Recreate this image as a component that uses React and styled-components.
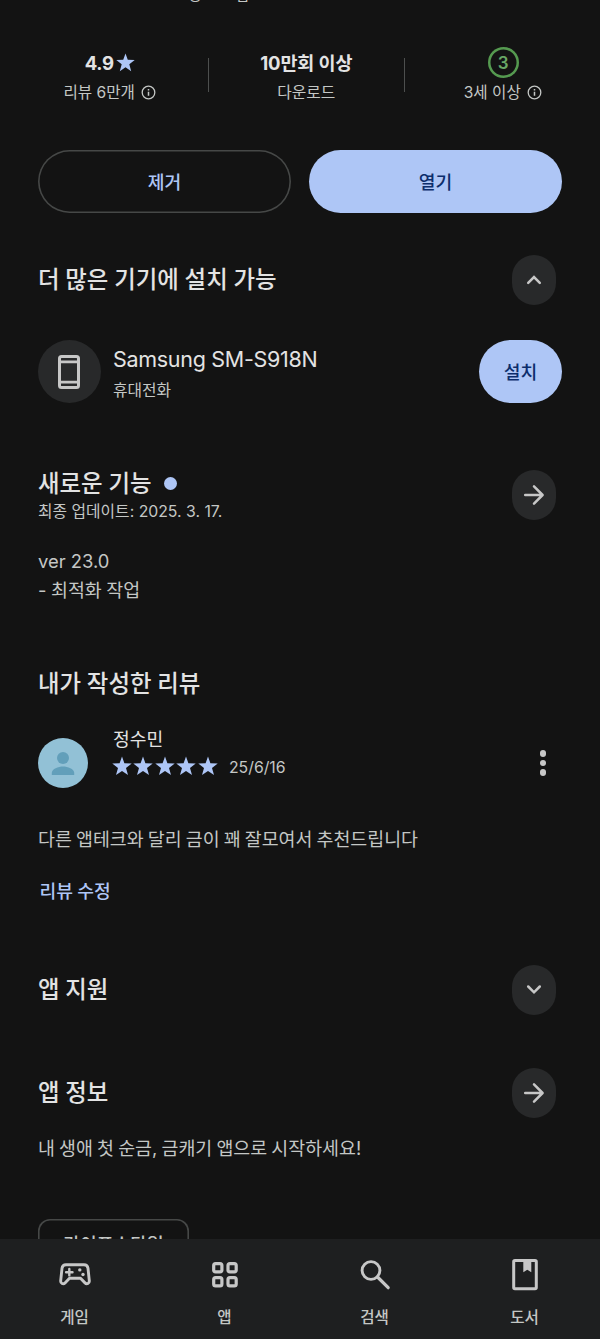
import React from 'react';
import styled, { createGlobalStyle } from 'styled-components';

const Global = createGlobalStyle`
  * { box-sizing: border-box; }
  body { margin: 0; background: #131313; }
  button { font: inherit; padding: 0; border: 0; background: none; color: inherit; }
  h2, p { margin: 0; }
  svg { display: block; flex: none; }
`;

const Screen = styled.div`
  width: 600px;
  height: 1339px;
  display: flex;
  flex-direction: column;
  overflow: hidden;
  background: #131313;
  color: #e3e3e3;
  font-family: Inter, "Noto Sans CJK KR", sans-serif;
`;

const Content = styled.main`
  flex: 1;
  min-height: 0;
  overflow: hidden;
  display: flex;
  flex-direction: column;
`;

const Text = styled.span`
  display: block;
  white-space: nowrap;
  font-size: ${(p) => p.$size}px;
  line-height: ${(p) => p.$line || 24}px;
  font-weight: ${(p) => p.$weight || 400};
  color: ${(p) => p.$color || '#c4c7c5'};
  letter-spacing: ${(p) => p.$track || 0}px;
  word-spacing: ${(p) => p.$word || 0}px;
`;

const AdsNotice = styled.div`
  height: 46px;
  flex: none;
  padding-left: 188px;
  overflow: hidden;
  & > span { margin-top: -17px; }
`;

const Stats = styled.section`
  display: flex;
  align-items: center;
  height: 60px;
  flex: none;
  padding-left: 12px;
  margin-right: -12px;
`;

const Stat = styled.div`
  width: 195.5px;
  display: flex;
  flex-direction: column;
  align-items: center;
`;

const StatTop = styled.div`
  height: 33px;
  display: flex;
  align-items: center;
  gap: 2px;
  padding-top: 1px;
  & > span { margin-top: 1px; }
`;

const StatLabel = styled.div`
  height: 28px;
  display: flex;
  align-items: center;
  gap: 6px;
  & > span { margin-top: 1px; }
`;

const Divider = styled.div`
  width: 1px;
  height: 34px;
  background: #4d4f4e;
  margin-top: -2px;
`;

const AgeBadge = styled.div`
  width: 31px;
  height: 31px;
  margin-left: 1px;
  box-shadow: inset 0 0 0 2.5px #559a50;
  border-radius: 50%;
  display: flex;
  align-items: center;
  justify-content: center;
`;

const Actions = styled.div`
  display: flex;
  justify-content: space-between;
  margin: 44px 38px 0;
  flex: none;
`;

const PillButton = styled.button`
  height: 63px;
  width: ${(p) => p.$width || '253px'};
  flex: none;
  border-radius: 32px;
  display: flex;
  align-items: center;
  justify-content: center;
  background: ${(p) => (p.$filled ? '#aec6f6' : 'transparent')};
  box-shadow: ${(p) => (p.$filled ? 'none' : 'inset 0 0 0 1.6px #464847')};
`;

const SectionHeader = styled.header`
  display: flex;
  justify-content: space-between;
  align-items: center;
  height: 50px;
  flex: none;
  margin: ${(p) => p.$top}px 44px 0 38px;
`;

const RoundButton = styled.button`
  width: 44px;
  height: 50px;
  border-radius: 22px;
  background: #28292a;
  display: flex;
  align-items: center;
  justify-content: center;
`;

const DeviceRow = styled.div`
  display: flex;
  align-items: center;
  margin: 35px 38px 0;
  height: 63px;
  flex: none;
`;

const DeviceIcon = styled.div`
  width: 63px;
  height: 63px;
  border-radius: 50%;
  background: #28292a;
  display: flex;
  align-items: center;
  justify-content: center;
  padding-right: 1px;
`;

const DeviceInfo = styled.div`
  flex: 1;
  margin: 5px 0 0 12px;
  display: flex;
  flex-direction: column;
  gap: 6px;
`;

const TitleWithDot = styled.div`
  display: flex;
  align-items: center;
  gap: 13px;
`;

const UpdateInfo = styled.div`
  display: flex;
  flex-direction: column;
  gap: 1px;
  padding-top: 2px;
`;

const Dot = styled.i`
  width: 13px;
  height: 13px;
  border-radius: 50%;
  background: #aec6f6;
`;

const Block = styled.div`
  margin: ${(p) => p.$top}px 38px 0;
  padding-left: ${(p) => p.$indent || 0}px;
  flex: none;
`;

const Reviewer = styled.div`
  display: flex;
  align-items: center;
  height: 50px;
  flex: none;
  margin: 39px 38px 0;
`;

const ReviewerInfo = styled.div`
  flex: 1;
  margin: -21px 0 0 25px;
`;

const Rating = styled.div`
  display: flex;
  align-items: center;
  gap: 1.4px;
  height: 28px;
  margin-left: -1px;
  & > span { margin: 4px 0 0 10px; }
`;

const MoreButton = styled.button`
  width: 38px;
  height: 50px;
  display: flex;
  flex-direction: column;
  align-items: center;
  justify-content: center;
  gap: 3px;
`;

const MoreDot = styled.i`
  width: 6.5px;
  height: 6.5px;
  border-radius: 50%;
  background: #c7c7c7;
`;

const Chip = styled.div`
  width: 151px;
  height: 50px;
  flex: none;
  margin: 59px 0 0 38px;
  box-shadow: inset 0 0 0 1.6px #464847;
  border-radius: 12px;
  display: flex;
  align-items: center;
  justify-content: center;
`;

const Nav = styled.nav`
  height: 100px;
  flex: none;
  display: grid;
  grid-template-columns: repeat(4, 1fr);
  background: #1e1f20;
`;

const NavItem = styled.div`
  display: flex;
  flex-direction: column;
  align-items: center;
  padding-top: 17px;
  gap: 14px;
  & > span { margin-left: -1px; }
`;

const Star = ({ size }) => (
  <svg width={size} height={size} viewBox="0 0 20 20" fill="#aec6f6">
    <path d="M10 .4l2.400 6.800 7.300.2-5.700 4.500 2 7.200L10 15l-6 4.100 2-7.200L.3 7.400l7.300-.2z" />
  </svg>
);

const Info = () => (
  <svg width="15" height="15" viewBox="0 0 15 15" fill="none" stroke="#c4c7c5" strokeWidth="1.3">
    <circle cx="7.5" cy="7.500" r="6.300" />
    <path d="M7.500 6.800v4M7.500 4v1.500" strokeWidth="1.500" />
  </svg>
);

const Chevron = ({ up }) => (
  <svg width="20" height="20" viewBox="0 0 20 20" fill="none" stroke="#c7c7c7" strokeWidth="2.5" strokeLinecap="round">
    <path d={up ? 'M4.200 12.800L10 7l5.800 5.800' : 'M4.200 6.500L10 12.300l5.800-5.800'} />
  </svg>
);

const Arrow = () => (
  <svg width="24" height="24" viewBox="0 0 24 24" fill="none" stroke="#c7c7c7" strokeWidth="2.5" strokeLinecap="round" strokeLinejoin="round">
    <path d="M3.200 12h17.200M12 3.400l8.600 8.600-8.600 8.600" />
  </svg>
);

const Phone = () => (
  <svg width="22" height="34" viewBox="0 0 22 34" fill="none" stroke="#c7c7c7">
    <rect x="1.500" y="1.500" width="19" height="31" rx="2" strokeWidth="3" />
    <path d="M2 6.900h18M2 27.100h18" strokeWidth="2.600" />
  </svg>
);

const Avatar = () => (
  <svg width="50" height="50" viewBox="0 0 50 50">
    <circle cx="25" cy="25" r="25" fill="#92c1d6" />
    <circle cx="25" cy="20" r="6" fill="#629fba" />
    <path d="M13.800 37v-2.200c0-4 6.600-6.300 11.200-6.300s11.200 2.300 11.200 6.300V37z" fill="#629fba" />
  </svg>
);

const Gamepad = () => (
  <svg width="38" height="38" viewBox="0 0 38 38" fill="none" stroke="#c7c7c7" strokeLinecap="round" strokeLinejoin="round">
    <path d="M10 8.800h18c2.300 0 3.700 1.300 4 3.500l1.300 12.400c.3 2.700-2.500 4-4.300 2.200l-4.500-4.700h-11L9 26.900c-1.800 1.800-4.600.5-4.300-2.200L6 12.300c.3-2.200 1.700-3.500 4-3.500z" strokeWidth="2.900" />
    <path d="M13.300 13v6.400M10.100 16.200h6.400" strokeWidth="2.400" />
    <g fill="#c7c7c7" stroke="none">
      <circle cx="23.800" cy="13.900" r="1.700" />
      <circle cx="27" cy="18.500" r="1.700" />
    </g>
  </svg>
);

const AppsGrid = () => (
  <svg width="38" height="38" viewBox="0 0 38 38" fill="none" stroke="#c7c7c7" strokeWidth="3.200">
    <rect x="7.700" y="7.600" width="8.200" height="8.200" rx="1.900" />
    <rect x="22" y="7.600" width="8.200" height="8.200" rx="1.900" />
    <rect x="7.700" y="21.700" width="8.200" height="8.200" rx="1.900" />
    <rect x="22" y="21.700" width="8.200" height="8.200" rx="1.900" />
  </svg>
);

const Search = () => (
  <svg width="38" height="38" viewBox="0 0 38 38" fill="none" stroke="#c7c7c7" strokeLinecap="round">
    <circle cx="15" cy="14.500" r="8.900" strokeWidth="2.900" />
    <path d="M21.500 21l10.700 10.700" strokeWidth="3.200" />
  </svg>
);

const Book = () => (
  <svg width="38" height="38" viewBox="0 0 38 38" fill="none" stroke="#c7c7c7">
    <rect x="7.700" y="4.500" width="22.600" height="28.300" rx="1.300" strokeWidth="3" />
    <path d="M17.300 5h8v11.200l-4-2.400-4 2.400z" fill="#c7c7c7" stroke="none" />
  </svg>
);

const Title = ({ children }) => (
  <Text as="h2" $size={23.4} $line={30} $weight={500} $color="#e3e3e3" $word={-0.4}>{children}</Text>
);

const tabs = [
  { label: '게임', Icon: Gamepad },
  { label: '앱', Icon: AppsGrid },
  { label: '검색', Icon: Search },
  { label: '도서', Icon: Book },
];

export default function App() {
  return (
    <Screen>
      <Global />
      <Content>
        <AdsNotice><Text $size={15.6}>광고 포함</Text></AdsNotice>
        <Stats>
          <Stat>
            <StatTop><Text $size={18.6} $weight={700} $color="#e3e3e3" $track={-0.3}>4.9</Text><Star size={19} /></StatTop>
            <StatLabel><Text $size={15.6}>리뷰 6만개</Text><Info /></StatLabel>
          </Stat>
          <Divider />
          <Stat>
            <StatTop><Text $size={18.5} $weight={700} $color="#e3e3e3" $track={-0.1}>10만회 이상</Text></StatTop>
            <StatLabel><Text $size={15.8}>다운로드</Text></StatLabel>
          </Stat>
          <Divider />
          <Stat>
            <StatTop><AgeBadge><Text $size={17} $weight={600} $color="#68a765">3</Text></AgeBadge></StatTop>
            <StatLabel><Text $size={15.6}>3세 이상</Text><Info /></StatLabel>
          </Stat>
        </Stats>

        <Actions>
          <PillButton><Text $size={18.2} $weight={500} $color="#aec6f6">제거</Text></PillButton>
          <PillButton $filled><Text $size={18.2} $weight={500} $color="#0c2d6b">열기</Text></PillButton>
        </Actions>

        <SectionHeader $top={42}>
          <Title>더 많은 기기에 설치 가능</Title>
          <RoundButton><Chevron up /></RoundButton>
        </SectionHeader>
        <DeviceRow>
          <DeviceIcon><Phone /></DeviceIcon>
          <DeviceInfo>
            <Text $size={21.5} $line={28} $color="#e3e3e3" $track={-0.3}>Samsung SM-S918N</Text>
            <Text $size={15.8}>휴대전화</Text>
          </DeviceInfo>
          <PillButton $filled $width="83px"><Text $size={18.2} $weight={500} $color="#0c2d6b">설치</Text></PillButton>
        </DeviceRow>

        <SectionHeader $top={67}>
          <UpdateInfo>
            <TitleWithDot><Title>새로운 기능</Title><Dot /></TitleWithDot>
            <Text $size={15.8}>최종 업데이트: 2025. 3. 17.</Text>
          </UpdateInfo>
          <RoundButton><Arrow /></RoundButton>
        </SectionHeader>
        <Block $top={27}>
          <Text $size={18.4} $line={29}>ver 23.0</Text>
          <Text $size={18.4} $line={29} $word={-0.6}>- 최적화 작업</Text>
        </Block>

        <Block $top={64}><Title>내가 작성한 리뷰</Title></Block>
        <Reviewer>
          <Avatar />
          <ReviewerInfo>
            <Text $size={18.2} $line={26} $color="#e3e3e3">정수민</Text>
            <Rating>
              {[0, 1, 2, 3, 4].map((i) => <Star key={i} size={20} />)}
              <Text $size={15.8}>25/6/16</Text>
            </Rating>
          </ReviewerInfo>
          <MoreButton><MoreDot /><MoreDot /><MoreDot /></MoreButton>
        </Reviewer>
        <Block $top={39}>
          <Text $size={18.4} $word={-1.05}>다른 앱테크와 달리 금이 꽤 잘모여서 추천드립니다</Text>
        </Block>
        <Block $top={28} $indent={1.5}>
          <Text $size={18.2} $weight={500} $color="#aec6f6" $word={-0.5}>리뷰 수정</Text>
        </Block>

        <SectionHeader $top={62}>
          <Title>앱 지원</Title>
          <RoundButton><Chevron /></RoundButton>
        </SectionHeader>
        <SectionHeader $top={53}>
          <Title>앱 정보</Title>
          <RoundButton><Arrow /></RoundButton>
        </SectionHeader>
        <Block $top={18}>
          <Text $size={18.4} $word={-1}>내 생애 첫 순금, 금캐기 앱으로 시작하세요!</Text>
        </Block>
        <Chip><Text $size={18.2} $weight={500}>라이프스타일</Text></Chip>
      </Content>
      <Nav>
        {tabs.map(({ label, Icon }) => (
          <NavItem key={label}>
            <Icon />
            <Text $size={15.6} $weight={500} $line={20}>{label}</Text>
          </NavItem>
        ))}
      </Nav>
    </Screen>
  );
}
